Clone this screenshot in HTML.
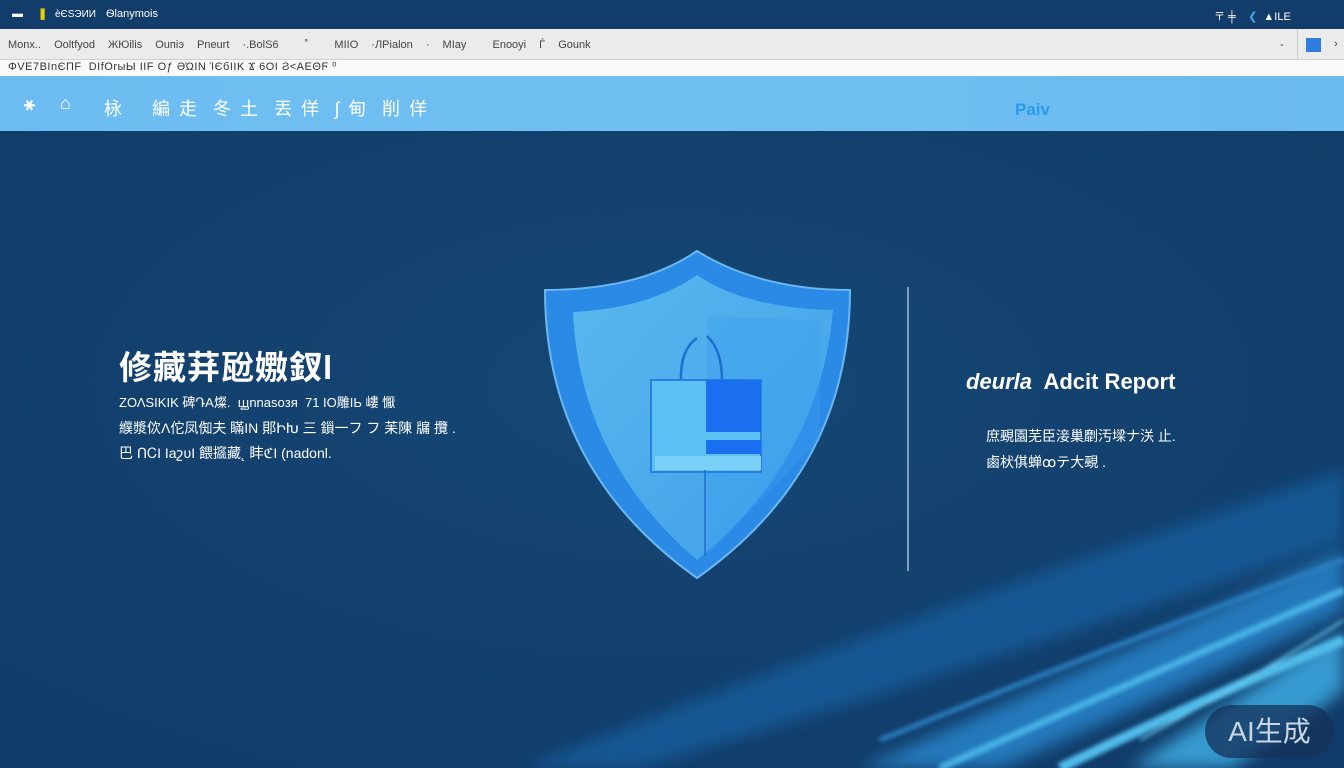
<!DOCTYPE html>
<html><head><meta charset="utf-8"><style>
*{margin:0;padding:0;box-sizing:border-box}
body{width:1344px;height:768px;overflow:hidden;background:#123f6c;font-family:"Liberation Sans","Noto Sans CJK SC",sans-serif;position:relative}
.top{position:absolute;left:0;top:0;width:1344px;height:29px;background:#123d6a;color:#fff;font-size:11px}
.gray{position:absolute;left:0;top:29px;width:1344px;height:31px;background:#ebebeb;border-bottom:1px solid #d0d0d0;color:#444;font-size:11px}
.white{position:absolute;left:0;top:60px;width:1344px;height:16px;background:#fafafa;color:#333;font-size:11px;line-height:14px;padding-left:8px;letter-spacing:0.5px}
.blue{position:absolute;left:0;top:76px;width:1344px;height:55px;background:linear-gradient(90deg,#6cbcf1,#70c0f3 50%,#6bbaf0);color:#fff;font-size:18px}
.t{position:absolute;white-space:nowrap}
</style></head><body>
<svg style="position:absolute;left:0;top:0" width="1344" height="768">
<defs>
<radialGradient id="bg" cx="0.5" cy="0.4" r="0.7"><stop offset="0" stop-color="#154775"/><stop offset="1" stop-color="#113c69"/></radialGradient>
<filter id="bl"><feGaussianBlur stdDeviation="8"/></filter>
<filter id="bl2"><feGaussianBlur stdDeviation="2"/></filter>
<linearGradient id="sh" x1="0" y1="0" x2="1" y2="1"><stop offset="0" stop-color="#5ab8ee"/><stop offset="1" stop-color="#3f9fe8"/></linearGradient>
</defs>
<rect x="0" y="131" width="1344" height="637" fill="url(#bg)"/>
<g filter="url(#bl)" opacity="0.9">
<path d="M520 768 Q950 600 1344 470 L1344 540 Q1000 660 640 768Z" fill="#185a98"/>
<path d="M860 768 Q1130 650 1344 550 L1344 610 Q1180 690 1000 768Z" fill="#2680c4"/>
<path d="M1130 768 Q1250 690 1344 630 L1344 690 Q1290 730 1230 768Z" fill="#3aa4dc"/>
</g>
<g filter="url(#bl2)">
<path d="M940 768 Q1160 670 1344 590" stroke="#48b2e6" stroke-width="7" fill="none"/>
<path d="M1060 768 Q1200 700 1344 640" stroke="#4fbbea" stroke-width="10" fill="none"/>
<path d="M1140 740 Q1250 680 1344 620" stroke="#6fcdf0" stroke-width="2" fill="none"/>
<path d="M880 740 Q1100 650 1344 560" stroke="#2a7fc2" stroke-width="5" fill="none"/>
</g>
<!-- shield -->
<path d="M697 251 Q640 290 545 290 Q545 470 697 578 Q850 470 850 290 Q760 290 697 251Z" fill="#2b8ae6" stroke="#6ab8f0" stroke-width="2"/>
<path d="M697 275 Q650 308 573 312 Q580 460 697 560 Q820 460 833 310 Q745 308 697 275Z" fill="url(#sh)"/>
<path d="M707 316 L707 556 Q780 480 820 440 L820 320 Z" fill="#3c9ff0" opacity="0.35"/>
<path d="M697 338 Q680 350 681 380 M707 336 Q722 350 722 380" stroke="#1a6fd0" stroke-width="2.5" fill="none"/>
<rect x="651" y="380" width="110" height="92" fill="#5bc0f2" stroke="#2a7fe0" stroke-width="2"/>
<rect x="706" y="380" width="55" height="52" fill="#1a6ef0"/>
<rect x="706" y="440" width="55" height="14" fill="#1a6ef0"/>
<rect x="655" y="456" width="106" height="14" fill="#7ad0f6"/>
<line x1="705" y1="470" x2="705" y2="556" stroke="#1b6fd0" stroke-width="1.5"/>
<line x1="908" y1="287" x2="908" y2="571" stroke="#7e9fbf" stroke-width="2"/>
</svg>
<div class="top">
<div class="t" style="left:12px;top:8px;font-weight:bold">▬</div>
<div class="t" style="left:38px;top:7px;color:#e8d000;font-weight:bold">❚</div>
<div class="t" style="left:55px;top:9px;font-size:10px">ѐЄЅЭИИ</div>
<div class="t" style="left:106px;top:8px">Ѳlаnуmоіs</div>
<div class="t" style="left:1214px;top:8px">〒 ╪ &nbsp;&nbsp;&nbsp;<span style="color:#4aa8f0">❮</span> &nbsp;▲ILЕ</div>
</div>
<div class="gray">
<div class="t" style="left:8px;top:10px;word-spacing:10px">Мonх.. Оoltfyod ЖЮilіs Оuпiэ Рneurt ·.ВоlЅ6 &nbsp;˚ &nbsp;ΜΙΙΟ ·ЛРіalon · ΜΙаy &nbsp;Еnooуi Ѓ Gоunk</div>
<div class="t" style="left:1280px;top:10px">-</div>
<div style="position:absolute;left:1297px;top:0;width:1px;height:31px;background:#ccc"></div>
<div style="position:absolute;left:1306px;top:9px;width:15px;height:14px;background:#2f7de0"></div>
<div class="t" style="left:1334px;top:9px">›</div>
</div>
<div class="white">ΦVЕ7ВІnЄПF &nbsp;DІfОrыЫ ΙΙF Оƒ ӘΏΙΝ ΊЄбΙΙΚ Ϫ 6ОΙ Ϩ˂ΑЕΘϜ ⁰</div>
<div class="blue">
<div class="t" style="left:24px;top:18px;font-weight:bold">⚹</div>
<div class="t" style="left:60px;top:17px;font-weight:bold">⌂</div>
<div class="t" style="left:104px;top:19px;letter-spacing:2px">栐 &nbsp;&nbsp;&nbsp;編 走 &nbsp;冬 土 &nbsp;丟 佯 &nbsp;ʃ 甸 &nbsp;削 佯</div>
<div class="t" style="left:1015px;top:24px;color:#2a9be6;font-weight:bold;font-size:17px">Paiv</div>
</div>
<div class="t" style="left:119px;top:341px;color:#fff;font-size:33px;font-weight:bold;letter-spacing:1px">修藏荓瓰嫐釵l</div>
<div class="t" style="left:119px;top:392px;color:#fff;font-size:13px">ΖΟΛЅΙΚΙΚ 碑ԴА燦. &nbsp;ꚗnnasoзя &nbsp;71 ΙΟ雕ΙЬ 嶁 懨</div>
<div class="t" style="left:119px;top:418px;color:#fff;font-size:14px">纀漿佽Λ佗凤倁夫 瞞ΙΝ 郥ԻԽ 三 鎻一フ フ 苿陳 牖 攬 .</div>
<div class="t" style="left:119px;top:443px;color:#fff;font-size:14px">巴 ՈᏟΙ ΙаշυΙ 餵攨藏˛ 盽ℭΙ (nadonl.</div>
<div class="t" style="left:966px;top:369px;color:#fff;font-size:22px;font-weight:bold"><i>deurla</i>&nbsp; Adcit Report</div>
<div class="t" style="left:986px;top:426px;color:#fff;font-size:14px">庶覡園芜臣淁巢劘汚墚ナ浂 止.</div>
<div class="t" style="left:986px;top:452px;color:#fff;font-size:14px">鹵枤倛蝉ꝏテ大覡 .</div>
<div style="position:absolute;left:1205px;top:705px;width:129px;height:53px;border-radius:27px;background:rgba(20,50,90,0.75);color:#c8d6e6;font-size:28px;text-align:center;line-height:53px">AI生成</div>
</body></html>
